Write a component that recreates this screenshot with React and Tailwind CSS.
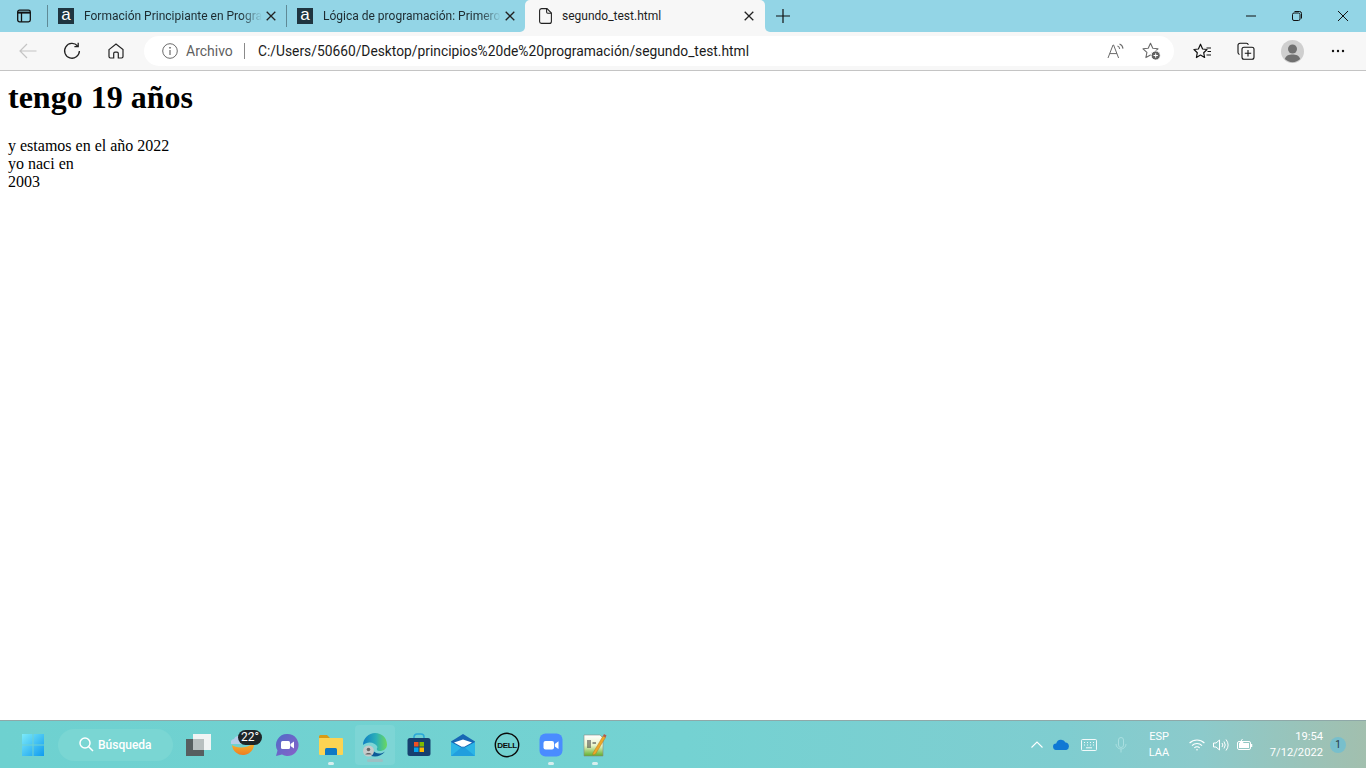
import React from "react";

const ui = { fontFamily: 'Roboto, "Noto Sans", sans-serif' };

function Close() {
  return (
    <svg width="10" height="10" viewBox="0 0 10 10" fill="none" stroke="#222" strokeWidth="1.3">
      <path d="M0.7 0.7 9.3 9.3M9.3 0.7 0.7 9.3" />
    </svg>
  );
}

function Tab({ title }) {
  return (
    <div className="w-[239px] h-8 flex items-center shrink-0">
      <div className="w-px h-[22px] bg-[#5f8a96]" />
      <div className="ml-[10px] w-4 h-4 bg-[#1f3540] flex items-center justify-center text-white text-[17px] leading-none font-normal" style={{ fontFamily: '"Liberation Sans", sans-serif' }}>
        <span className="-mt-[3px]">a</span>
      </div>
      <div className="ml-[10px] w-[178px] overflow-hidden whitespace-nowrap text-[12px] text-[#1d2b30] [mask-image:linear-gradient(to_right,black_88%,transparent_100%)]">
        {title}
      </div>
      <div className="ml-[4px] w-[10px] flex items-center"><Close /></div>
    </div>
  );
}

function TitleBar() {
  return (
    <div className="h-8 bg-[linear-gradient(#93d5e6_50%,#f7f7f7_50%)] flex shrink-0">
      <div className="flex items-center bg-[#93d5e6] rounded-br-[5px]">
        <div className="w-[47px] flex justify-center">
          <svg width="14" height="14" viewBox="0 0 14 14" fill="none" stroke="#111" strokeWidth="1.3">
            <rect x="0.7" y="1.2" width="12.6" height="11.6" rx="1.8" />
            <path d="M0.7 3.6H13.3" strokeWidth="2" />
            <path d="M4.5 3.6V12.8" />
          </svg>
        </div>
        <Tab title="Formación Principiante en Progra" />
        <Tab title="Lógica de programación: Primero" />
      </div>
      <div className="w-[240px] h-8 bg-[#f7f7f7] rounded-t-[5px] flex items-center shrink-0">
        <svg className="ml-[14px]" width="13" height="16" viewBox="0 0 13 16" fill="none" stroke="#222" strokeWidth="1.1">
          <path d="M2.5 0.6H8L12.4 5V13.4A2 2 0 0 1 10.4 15.4H2.5A2 2 0 0 1 0.6 13.4V2.6A2 2 0 0 1 2.5 0.6Z" />
          <path d="M7.6 0.8V4A1.2 1.2 0 0 0 8.8 5.2H12.2" />
        </svg>
        <div className="ml-[10px] w-[182px] text-[12px] text-[#1d1d1d] whitespace-nowrap overflow-hidden">segundo_test.html</div>
        <Close />
      </div>
      <div className="flex-1 flex items-center bg-[#93d5e6] rounded-bl-[5px]">
        <div className="w-9 flex justify-center">
          <svg width="14" height="14" viewBox="0 0 14 14" stroke="#111" strokeWidth="1.2"><path d="M7 0V14M0 7H14" /></svg>
        </div>
        <div className="ml-auto flex items-center">
          <div className="w-[46px] flex justify-center">
            <svg width="10" height="2" viewBox="0 0 10 2" stroke="#111"><path d="M0 1H10" /></svg>
          </div>
          <div className="w-[46px] flex justify-center">
            <svg width="10" height="10" viewBox="0 0 10 10" fill="none" stroke="#111">
              <rect x="0.5" y="2" width="7.5" height="7.5" rx="1.5" />
              <path d="M2.5 0.5H7.5A2 2 0 0 1 9.5 2.5V7.5" />
            </svg>
          </div>
          <div className="w-[46px] flex justify-center">
            <svg width="10" height="10" viewBox="0 0 10 10" stroke="#111"><path d="M0 0 10 10M10 0 0 10" /></svg>
          </div>
        </div>
      </div>
    </div>
  );
}

function ToolBar() {
  return (
    <div className="h-[39px] bg-[#f7f7f7] border-b border-[#c4c4c4] flex items-start pl-[6px] pr-[6px] shrink-0">
      <div className="w-11 h-[38px] flex items-center justify-center">
        <svg width="18" height="16" viewBox="0 0 18 16" fill="none" stroke="#c4c4c4" strokeWidth="1.2"><path d="M17.5 8H1M8 1 1 8l7 7" /></svg>
      </div>
      <div className="w-11 h-[38px] flex items-center justify-center">
        <svg width="18" height="18" viewBox="0 0 18 18" fill="none" stroke="#222" strokeWidth="1.3">
          <path d="M14.6 4A7.4 7.4 0 1 0 16.4 9" />
          <path d="M15.2 0.8V4.6H11.4" />
        </svg>
      </div>
      <div className="w-11 h-[38px] flex items-center justify-center">
        <svg width="16" height="16" viewBox="0 0 16 16" fill="none" stroke="#222" strokeWidth="1.2">
          <path d="M1 6.6 8 1l7 5.6V13.6A1.4 1.4 0 0 1 13.6 15H10.3V10.5A1.3 1.3 0 0 0 9 9.2H7A1.3 1.3 0 0 0 5.7 10.5V15H2.4A1.4 1.4 0 0 1 1 13.6Z" />
        </svg>
      </div>
      <div className="ml-[6px] mt-1 w-[1030px] h-[30px] bg-white rounded-[15px] flex items-center text-[14px] shrink-0">
        <svg className="ml-[18px]" width="16" height="16" viewBox="0 0 16 16" fill="none" stroke="#6b6b6b" strokeWidth="1">
          <circle cx="8" cy="8" r="7.3" />
          <path d="M8 7V12" strokeWidth="1.2" />
          <circle cx="8" cy="4.8" r="0.5" fill="#6b6b6b" />
        </svg>
        <span className="ml-2 w-[46px] text-[#5f5f5f] whitespace-nowrap">Archivo</span>
        <div className="ml-[12px] w-px h-4 bg-[#8a8a8a]" />
        <span className="ml-[13px] text-[13.8px] text-[#1b1b1b] whitespace-nowrap">C:/Users/50660/Desktop/principios%20de%20programación/segundo_test.html</span>
        <div className="ml-auto flex items-center">
          <svg width="18" height="16" viewBox="0 0 18 16" fill="none" stroke="#6b6b6b" strokeWidth="1">
            <path d="M1 15 6 2h.6l5 13M2.8 10.6h7.2" />
            <path d="M10.5 3c1.2.4 2 1.400 2.200 2.800M12.500 1c2 .7 3.200 2.400 3.500 4.600" strokeWidth="1.100" />
          </svg>
          <div className="w-[17px]" />
          <svg className="mr-[13px]" width="19" height="19" viewBox="0 0 19 19" fill="none">
            <path d="M8.500 1.200 10.800 6.200 16 6.800 12.100 10.400 13.100 15.600 8.500 13 3.900 15.600 4.900 10.400 1 6.800 6.200 6.200Z" stroke="#6b6b6b" strokeWidth="1.100" strokeLinejoin="round" />
            <circle cx="13.700" cy="13.500" r="4.600" fill="#5f5f5f" stroke="#fff" />
            <path d="M13.700 11.300V15.700M11.500 13.500H15.900" stroke="#fff" />
          </svg>
        </div>
      </div>
      <div className="ml-[6px] w-11 h-[38px] flex items-center justify-center">
        <svg width="19" height="18" viewBox="0 0 19 18" fill="none" stroke="#111" strokeWidth="1.200" strokeLinejoin="round">
          <path d="M7.500 1.200 9.600 6 14 6.500 10.700 9.700 11.600 14.500 7.500 12.100 3.400 14.500 4.300 9.700 1 6.500 5.400 6Z" transform="translate(0 1)" />
          <path d="M13.500 6H18M14.500 9.500H18M13.500 13H18" />
        </svg>
      </div>
      <div className="w-11 h-[38px] flex items-center justify-center">
        <svg width="18" height="18" viewBox="0 0 18 18" fill="none" stroke="#111" strokeWidth="1.100">
          <path d="M2.500 12.500A2 2 0 0 1 1 10.600V3.200A2 2 0 0 1 3 1.200H9.400A2 2 0 0 1 11.300 2.800" />
          <rect x="5" y="5.200" width="12" height="12" rx="2" />
          <path d="M11 8V14.400M7.800 11.200H14.200" />
        </svg>
      </div>
      <div className="ml-[2px] w-11 h-[38px] flex items-center justify-center">
        <svg width="23" height="23" viewBox="0 0 23 23">
          <circle cx="11.500" cy="11.500" r="11.500" fill="#cfcfcf" />
          <circle cx="11.500" cy="9" r="4.500" fill="#707070" />
          <path d="M3.800 19C5 15.300 8 14.600 11.500 14.600S18 15.300 19.200 19A11 11 0 0 1 3.800 19Z" fill="#707070" />
        </svg>
      </div>
      <div className="ml-[2px] w-11 h-[38px] flex items-center justify-center">
        <svg width="14" height="4" viewBox="0 0 14 4" fill="#111">
          <circle cx="2" cy="2" r="1.200" /><circle cx="7" cy="2" r="1.200" /><circle cx="12" cy="2" r="1.200" />
        </svg>
      </div>
    </div>
  );
}

function Slot({ children, dot }) {
  return (
    <div className="w-11 h-12 flex flex-col items-center justify-center relative shrink-0">
      {children}
      {dot && <div className="absolute bottom-[4px] w-[6px] h-[3px] rounded-full bg-[#d8eeee]" />}
    </div>
  );
}

function TaskBar() {
  return (
    <div className="h-12 flex items-center border-t border-[#8fa8a8] bg-[linear-gradient(90deg,#6ed1d0_0%,#74d2d2_50%,#7fcdd0_78%,#8ccacb_88%,#a2bfae_100%)] shrink-0 -mt-px relative">
      <div className="ml-[11px]"><Slot>
        <svg width="24" height="24" viewBox="0 0 24 24">
          <defs>
            <linearGradient id="w1" x1="0" y1="0" x2="1" y2="1"><stop offset="0" stopColor="#7ceaf8" /><stop offset="1" stopColor="#0f9bf0" /></linearGradient>
          </defs>
          <path d="M1 1H11.500V11.500H1ZM12.500 1H23V11.500H12.500ZM1 12.500H11.500V23H1ZM12.500 12.500H23V23H12.500Z" fill="url(#w1)" />
        </svg>
      </Slot></div>
      <div className="ml-[3px] w-[115px] h-8 rounded-2xl bg-[#7ad6d3] flex items-center pl-[21px] text-white shrink-0 text-[12px] font-medium">
        <svg width="15" height="15" viewBox="0 0 15 15" fill="none" stroke="#fff" strokeWidth="1.500">
          <circle cx="6" cy="6" r="5" /><path d="M9.700 9.700 14 14" />
        </svg>
        <span className="ml-[4px]">Búsqueda</span>
      </div>
      <div className="ml-[4px]"><Slot>
        <svg width="26" height="24" viewBox="0 0 26 24">
          <rect x="7" y="1" width="18" height="16" fill="#f0f4f4" />
          <rect x="0" y="6" width="18" height="17" fill="#565f60" />
          <rect x="7" y="6" width="11" height="11" fill="#b8c0c0" />
        </svg>
      </Slot></div>
      <Slot>
        <div className="relative w-6 h-6">
          <svg width="24" height="24" viewBox="0 0 24 24">
            <defs>
              <linearGradient id="sun" x1="0" y1="0" x2="0" y2="1"><stop offset="0" stopColor="#f8b52c" /><stop offset="1" stopColor="#ee7e22" /></linearGradient>
            </defs>
            <path d="M1 12C5 15 15 16 23 10A11 11 0 0 1 1 12Z" fill="url(#sun)" />
            <path d="M0 11a3.500 3.500 0 0 1 3-5 5 5 0 0 1 8-2V11Z" fill="#b5cdea" />
          </svg>
          <div className="absolute -top-[3px] left-[7px] w-6 h-[15px] rounded-lg bg-[#1e2628] text-white text-[12px] leading-[15px] text-center">22°</div>
        </div>
      </Slot>
      <Slot>
        <svg width="24" height="24" viewBox="0 0 24 24">
          <defs>
            <linearGradient id="chat" x1="0" y1="0" x2="1" y2="1"><stop offset="0" stopColor="#4f6bc8" /><stop offset="1" stopColor="#8a62c8" /></linearGradient>
          </defs>
          <path d="M12.500 1A11 11 0 1 1 7 21.500L1 23 2.500 17.500A11 11 0 0 1 12.500 1Z" fill="url(#chat)" />
          <rect x="6" y="8" width="9" height="8" rx="1.500" fill="#fff" />
          <path d="M15.500 11 19 8.500V15.500L15.500 13Z" fill="#fff" />
        </svg>
      </Slot>
      <Slot dot>
        <svg width="24" height="22" viewBox="0 0 24 22">
          <path d="M0 2.500A1.500 1.500 0 0 1 1.500 1H8L11 4H0Z" fill="#d99c14" />
          <rect x="0" y="4" width="24" height="17" rx="1" fill="#fcd453" />
          <path d="M6 21V15.500A1.500 1.500 0 0 1 7.500 14H16.500A1.500 1.500 0 0 1 18 15.500V21Z" fill="#0f79c4" />
        </svg>
      </Slot>
      <div className="w-11 h-12 flex items-center justify-center shrink-0">
        <div className="w-10 h-10 rounded bg-[#7dd5d5] flex items-center justify-center relative">
          <svg width="26" height="26" viewBox="0 0 26 26">
            <defs>
              <linearGradient id="edge" x1="0" y1="0.500" x2="1" y2="0.500"><stop offset="0" stopColor="#0f7fc4" /><stop offset="0.550" stopColor="#2cb0b8" /><stop offset="1" stopColor="#6ad85e" /></linearGradient>
            </defs>
            <path d="M1 13C1 6 7 1 13 1C20 1 25 6 25 12.500C25 17 21 19 18 19C15 19 14 17.500 15.500 15C13 9.500 5 9 1 13Z" fill="url(#edge)" />
            <path d="M5 21C9 26 18 26 23 19.500C20 22 14 23 11 18Z" fill="#0c5a98" />
            <circle cx="6.500" cy="19" r="5.500" fill="#c6caca" />
            <circle cx="6.500" cy="17.500" r="1.800" fill="#666" />
            <path d="M3.300 22.500C4 20.500 9 20.500 9.700 22.500Z" fill="#666" />
          </svg>
          <div className="absolute bottom-[3px] w-4 h-[3px] rounded-full bg-[#9cc0c4]" />
        </div>
      </div>
      <Slot>
        <svg width="24" height="24" viewBox="0 0 24 24">
          <path d="M7 6V4A3 3 0 0 1 10 1H14A3 3 0 0 1 17 4V6" fill="none" stroke="#2aa8d8" strokeWidth="1.500" />
          <rect x="0.500" y="5" width="23" height="18" rx="2.500" fill="#16406f" />
          <rect x="7" y="9" width="4.500" height="4.500" fill="#f25022" />
          <rect x="12.500" y="9" width="4.500" height="4.500" fill="#7fba00" />
          <rect x="7" y="14.500" width="4.500" height="4.500" fill="#00a4ef" />
          <rect x="12.500" y="14.500" width="4.500" height="4.500" fill="#ffb900" />
        </svg>
      </Slot>
      <Slot>
        <svg width="24" height="24" viewBox="0 0 24 24">
          <path d="M12 1 24 8.500V23H0V8.500Z" fill="#1767b4" />
          <path d="M0 9 12 15.500 24 9V23H0Z" fill="#2cb5e6" />
          <path d="M3 9.500 12 6.500 21 9.500 12 14.500Z" fill="#fff" />
          <path d="M0 23 12 13 24 23Z" fill="#1a8fd8" opacity="0.600" />
        </svg>
      </Slot>
      <Slot>
        <svg width="26" height="26" viewBox="0 0 26 26">
          <circle cx="13" cy="13" r="11.700" fill="none" stroke="#0a0a0a" strokeWidth="1.400" />
          <text x="13" y="15.800" textAnchor="middle" fontSize="8" fontWeight="700" fill="#0a0a0a" fontFamily="Liberation Sans, sans-serif" letterSpacing="-0.400">DELL</text>
        </svg>
      </Slot>
      <Slot dot>
        <svg width="24" height="24" viewBox="0 0 24 24">
          <rect x="0.500" y="0.500" width="23" height="23" rx="6" fill="#4a8cff" />
          <rect x="4.500" y="8" width="10.500" height="8.500" rx="2" fill="#fff" />
          <path d="M15.800 11 19.500 8.200V16L15.800 13.400Z" fill="#fff" />
        </svg>
      </Slot>
      <Slot dot>
        <svg width="24" height="26" viewBox="0 0 24 26">
          <defs>
            <linearGradient id="np" x1="0" y1="0" x2="0" y2="1"><stop offset="0" stopColor="#ffffff" /><stop offset="0.500" stopColor="#e8f4c8" /><stop offset="1" stopColor="#5fae2c" /></linearGradient>
          </defs>
          <path d="M1 3H17L20 6V24H1Z" fill="url(#np)" stroke="#8a8a80" strokeWidth="0.600" />
          <path d="M5 8V16M7 8V16M9.500 11H13" stroke="#333" strokeWidth="1" fill="none" />
          <path d="M10 21 20 4 22.500 5.500 12.500 22 9.800 23Z" fill="#eea82a" stroke="#a86c10" strokeWidth="0.400" />
          <path d="M20 4 21 2 23.500 3.500 22.500 5.500Z" fill="#b85a4a" />
        </svg>
      </Slot>

      <div className="ml-auto flex items-center pr-[20px] text-white">
        <div className="w-6 flex justify-center">
          <svg width="12" height="7" viewBox="0 0 12 7" fill="none" stroke="#fff" strokeWidth="1.100"><path d="M0.500 6.500 6 1l5.500 5.500" /></svg>
        </div>
        <div className="w-6 flex justify-center">
          <svg width="17" height="11" viewBox="0 0 17 11">
            <path d="M3.500 11A3.300 3.300 0 0 1 3.200 4.400 5 5 0 0 1 12.500 3.600 3.800 3.800 0 0 1 13.300 11Z" fill="#0f78d4" />
          </svg>
        </div>
        <div className="w-8 flex justify-center">
          <svg width="16" height="12" viewBox="0 0 16 12" fill="none" stroke="#fff" strokeWidth="0.900">
            <rect x="0.500" y="0.500" width="15" height="11" rx="1" />
            <path d="M3 3.500H4M6 3.500H7M9 3.500H10M12 3.500H13M3 6H4M6 6H7M9 6H10M12 6H13M5 8.800H11" />
          </svg>
        </div>
        <div className="w-8 flex justify-center">
          <svg width="12" height="16" viewBox="0 0 12 16" fill="none" stroke="#a9dfe0" strokeWidth="1">
            <rect x="3.500" y="0.500" width="5" height="10" rx="2.500" />
            <path d="M1 7A5 5 0 0 0 11 7M6 12V15.500" />
          </svg>
        </div>
        <div className="w-11 flex flex-col items-center text-[11px] leading-4 text-white">
          <span>ESP</span>
          <span>LAA</span>
        </div>
        <div className="w-6 ml-1 flex justify-center">
          <svg width="16" height="12" viewBox="0 0 16 12" fill="none" stroke="#fff" strokeWidth="1.100">
            <path d="M0.600 4A10.500 10.500 0 0 1 15.400 4M3 6.600A7 7 0 0 1 13 6.600M5.300 9A3.600 3.600 0 0 1 10.700 9" />
            <circle cx="8" cy="10.800" r="0.800" fill="#fff" stroke="none" />
          </svg>
        </div>
        <div className="w-6 flex justify-center">
          <svg width="16" height="14" viewBox="0 0 16 14" fill="none" stroke="#fff" strokeWidth="1">
            <path d="M0.500 5H3L6.500 2V12L3 9H0.500Z" />
            <path d="M9 5A3 3 0 0 1 9 9M11 3.500A6 6 0 0 1 11 10.500M13 1.500A9 9 0 0 1 13 12.500" />
          </svg>
        </div>
        <div className="w-6 flex justify-center">
          <svg width="16" height="12" viewBox="0 0 16 12" fill="none" stroke="#fff" strokeWidth="1">
            <rect x="0.500" y="2.500" width="13" height="8" rx="1.500" />
            <rect x="2" y="4" width="10" height="5" fill="#fff" stroke="none" />
            <path d="M14.500 5V8" strokeWidth="1.500" />
            <path d="M5.500 0 3 3.500H6L4.500 6" />
          </svg>
        </div>
        <div className="w-[66px] flex flex-col items-end text-[11.2px] leading-4 text-white">
          <span>19:54</span>
          <span>7/12/2022</span>
        </div>
        <div className="ml-[7px] w-4 h-4 rounded-full bg-[#78bfcc] text-[#26383c] text-[10px] leading-4 text-center">1</div>
      </div>
    </div>
  );
}

export default function App() {
  return (
    <div className="w-full h-screen flex flex-col overflow-hidden bg-white" style={ui}>
      <TitleBar />
      <ToolBar />
      <main className="flex-1 px-2 pt-2 text-black text-[16px] leading-[18px]" style={{ fontFamily: '"Liberation Serif", serif' }}>
        <h1 className="text-[32px] leading-[37px] font-bold mb-[21px]">tengo 19 años</h1>
        <div>y estamos en el año 2022</div>
        <div>yo naci en</div>
        <div>2003</div>
      </main>
      <TaskBar />
    </div>
  );
}
